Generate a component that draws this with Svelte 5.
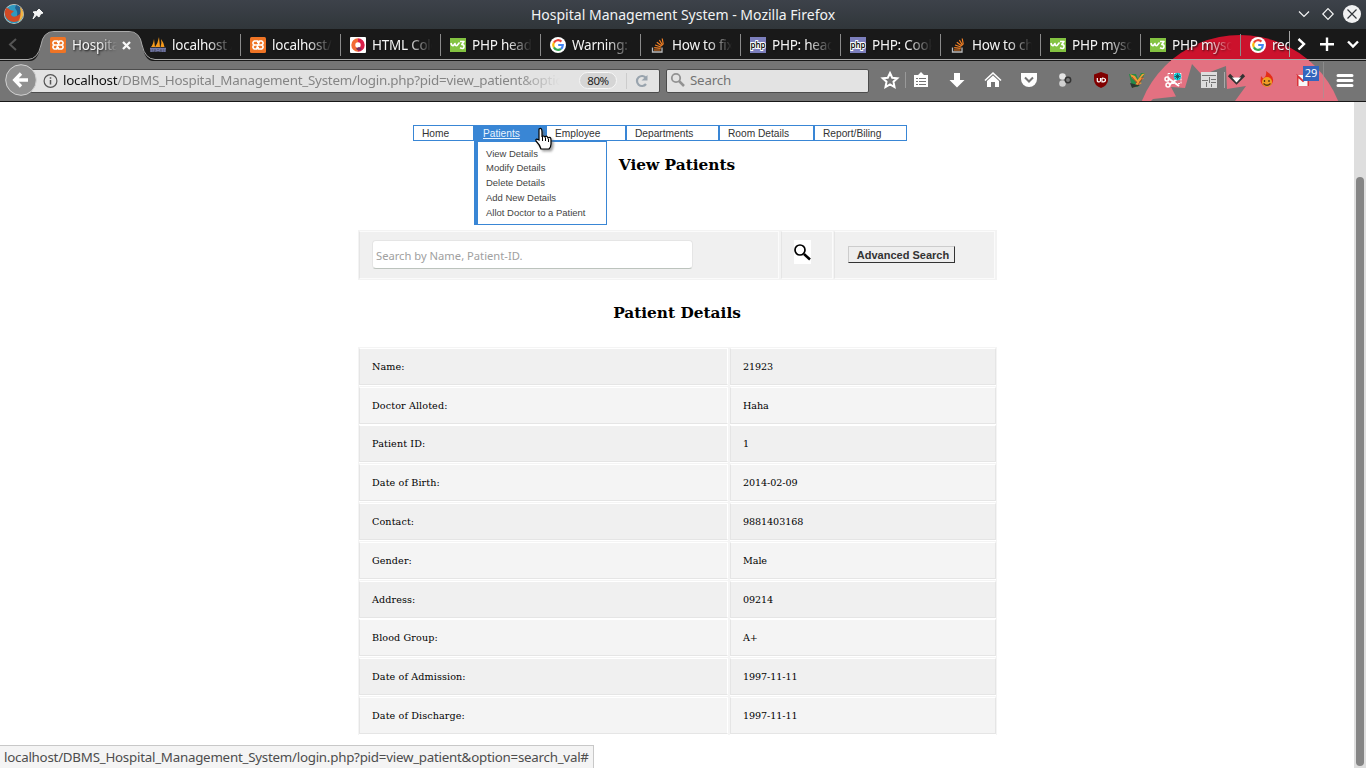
<script>
  const tabs = [
    ['xampp', 'Hospital'], ['pma', 'localhost /'], ['xampp', 'localhost/'], ['html', 'HTML Colo'],
    ['w3', 'PHP heade'], ['google', 'Warning: \''], ['so', 'How to fix'], ['php', 'PHP: head'],
    ['php', 'PHP: Cook'], ['so', 'How to ch'], ['w3', 'PHP mysql'], ['w3', 'PHP mysql'], ['google', 'redi']
  ];
  const nav = [['Home', 61], ['Patients', 72], ['Employee', 80], ['Departments', 93], ['Room Details', 95], ['Report/Biling', 92]];
  const menu = ['View Details', 'Modify Details', 'Delete Details', 'Add New Details', 'Allot Doctor to a Patient'];
  const rows = [
    ['Name:', '21923'], ['Doctor Alloted:', 'Haha'], ['Patient ID:', '1'], ['Date of Birth:', '2014-02-09'],
    ['Contact:', '9881403168'], ['Gender:', 'Male'], ['Address:', '09214'], ['Blood Group:', 'A+'],
    ['Date of Admission:', '1997-11-11'], ['Date of Discharge:', '1997-11-11']
  ];
</script>

{#snippet favicon(kind)}
  <svg class="fav" width="16" height="16" viewBox="0 0 16 16">
    {#if kind === 'xampp'}
      <rect width="16" height="16" rx="1.5" fill="#ef7425" />
      <path d="M7.800 6V4H4.200L3 5.200V6.800L4.500 8 3 9.200V10.800L4.200 12H6.500L9.500 4H11.800L13 5.200V6.800L11.500 8 13 9.200V10.800L11.800 12H8.200V10M4.500 8H11.500" fill="none" stroke="#fff" stroke-width="1.600" stroke-linejoin="round" />
    {:else if kind === 'pma'}
      <path d="M1 10Q3 8 4 2L5 10ZM5 10Q8 6 9 0L10 10ZM10.500 10Q12 6 11 2Q14 6 14.500 10Z" fill="#f79a1c" />
      <path d="M0 11.500H16M1 15V12H4V14H1M6 15V12L8 14 10 12V15M12 15V12H15V15M12 14H15" fill="none" stroke="#7479a9" stroke-width="1.400" />
    {:else if kind === 'html'}
      <rect width="16" height="16" rx="1" fill="#fff" />
      <path d="M8 3.300A4.700 4.700 0 0 0 8 12.700" fill="none" stroke="#f36b35" stroke-width="4" />
      <path d="M8 3.300A4.700 4.700 0 0 1 8 12.700" fill="none" stroke="#d91f4a" stroke-width="4" />
      <path d="M6 11.500Q8 15 12 12L9 10Z" fill="#753160" />
    {:else if kind === 'w3'}
      <rect y="1" width="16" height="14" fill="#83c341" />
      <path d="M1 6Q1.500 9 3.500 8.500L5 6.500Q5 9 7 8.500L9.500 5.500M10 4.500H14L11.800 7.500Q14.500 7.500 14 10T10 10.800" fill="none" stroke="#fff" stroke-width="1.600" stroke-linejoin="round" />
    {:else if kind === 'google'}
      <circle cx="8" cy="8" r="8" fill="#fff" />
      <g fill="none" stroke-width="2.200"><path d="M3.900 5.600A4.800 4.800 0 0 1 11.400 4.600" stroke="#ea4335" /><path d="M3.900 5.600A4.800 4.800 0 0 0 3.900 10.400" stroke="#fbbc05" /><path d="M3.900 10.400A4.800 4.800 0 0 0 11 11.800" stroke="#34a853" /><path d="M11 11.800Q12.800 10.300 12.800 8H8.200" stroke="#4285f4" /></g>
    {:else if kind === 'so'}
      <path d="M2.500 10.500V15H12V10.500" fill="none" stroke="#bcbbbb" stroke-width="1.300" />
      <path d="M4 13H10.500M4.200 10.700 10.700 11.400M5 8 11 10M6.800 5.200 11.800 9M9.400 3 12.600 8.400M12.200 1.500 13.300 7.500" stroke="#f48024" stroke-width="1.200" />
    {:else}
      <rect width="16" height="16" fill="#7c7fbd" />
      <text x="8" y="10.500" text-anchor="middle" textLength="15" lengthAdjust="spacingAndGlyphs" font-family="Noto Sans" font-size="9" font-weight="600" fill="#111" stroke="#fff" stroke-width="2" paint-order="stroke">php</text>
    {/if}
  </svg>
{/snippet}

<div class="screen">
  <header class="titlebar">
    <svg width="50" height="29" viewBox="0 0 50 29">
      <circle cx="14" cy="14" r="10" fill="#d5d3ca" />
      <circle cx="14" cy="14" r="9.300" fill="#3099bf" />
      <path d="M16 5Q22 6 22 14Q21 18 16 18Q19 13 15 8Z" fill="#23608e" />
      <path d="M6 8Q9 8 10 10L14 11 12 13Q10 14 12 16Q15 18 20 14Q22 10 20 7Q24 11 23 15A9.300 9.300 0 0 1 5 15Q4 12 6 8Z" fill="#d24a25" />
      <path d="M20 7Q24 11 23.200 15Q22 20 18 22Q22 16 20 7" fill="#f0b646" />
      <path d="M39 9 43 13 40.500 14 39 17 36.500 15 33 19 35 14 33 12 36.500 11.500Z" fill="#f5f6f6" stroke="#f5f6f6" stroke-linejoin="round" />
    </svg>
    <span class="wtitle">Hospital Management System - Mozilla Firefox</span>
    <svg width="80" height="29" viewBox="0 0 80 29" fill="none" stroke="#f4f5f5" stroke-width="1.200">
      <path d="M13 11.500 18 16.500 23 11.500M42 8.700 47.200 14 42 19.300 36.800 14Z" />
      <circle cx="66" cy="14" r="9" fill="#f0f1f2" stroke="none" /><path d="M61.500 9.500 70.500 18.500M70.500 9.500 61.500 18.500" stroke="#31363b" />
    </svg>
  </header>

  <div class="chrome">
    <svg class="theme" width="1366" height="72" viewBox="0 29 1366 72">
      <circle cx="1240" cy="141" r="106" fill="#cc122c" />
      <path d="M0 61H30Q38 61 41 45Q43 32 54 32H129Q140 32 142 45Q145 61 153 61H1366V101H0Z" fill="#757575" />
      <clipPath id="bar"><rect y="60" width="1366" height="41" /></clipPath>
      <circle cx="1240" cy="141" r="106" fill="#e37181" clip-path="url(#bar)" />
      <path d="M1151 101 1153 99 1176 96.500 1171 87 1185 88 1192 64 1202 75 1226 66 1227 89 1246 86 1235 101Z" fill="#757575" />
      <path d="M0 59.500H28Q38 59 41 45Q43 31.500 54 31.500H129Q140 31.500 142 45Q145 59 155 59.500H1366" fill="none" stroke="#aaa" />
    </svg>
    <div class="tabbar">
      <svg width="40" height="31" viewBox="0 0 40 31"><path d="M16 10 10 15.500 16 21" fill="none" stroke="#555" stroke-width="2" /></svg>
      <div class="tabs">
        {#each tabs as [kind, label], i}
          <div class="tab" class:active={i === 0}>
            {@render favicon(kind)}<span class="tlabel">{label}</span>
            {#if i === 0}<svg class="close" width="9" height="9" viewBox="0 0 9 9"><path d="M1 1 8 8M8 1 1 8" stroke="#f8f8f8" stroke-width="2.300" /></svg>{/if}
          </div>
        {/each}
      </div>
      <svg width="77" height="31" viewBox="0 0 77 31" fill="none" stroke="#fff" stroke-width="2.400">
        <path d="M.5 2V28" stroke="#a5a5a5" stroke-width="1" /><path d="M9.500 10 15 15 9.500 20.500M38 8.500V22M31 15.200H45M59 12.500 64 17.500 69 12.500" />
      </svg>
    </div>
    <div class="toolbar">
      <svg class="back" width="40" height="41" viewBox="0 0 40 41"><circle cx="21" cy="20" r="15.300" fill="#909090" stroke="#d1d1d1" /><path d="M28 20H16M21 13.500 14.700 20 21 26.500" fill="none" stroke="#fff" stroke-width="3.300" /></svg>
      <div class="url">
        <svg width="17" height="16" viewBox="0 0 17 16"><circle cx="7.500" cy="8" r="6.400" fill="none" stroke="#555" stroke-width="1.200" /><path d="M7.500 7V11.500M7.500 4.200V5.800" stroke="#555" stroke-width="1.500" /></svg>
        <span class="address"><b>localhost</b>/DBMS_Hospital_Management_System/login.php?pid=view_patient&amp;optio</span>
        <span class="zoom">80%</span>
        <svg class="reload" width="24" height="20" viewBox="0 0 24 20"><path d="M.5 2V18" stroke="#ccc" /><path d="M20 7A5 5 0 1 0 20 13" fill="none" stroke="#99a4ae" stroke-width="2.200" /><path d="M21.500 4V9.500H15.500Z" fill="#99a4ae" /></svg>
      </div>
      <div class="search">
        <svg width="20" height="20" viewBox="0 0 20 20" fill="none" stroke="#929292"><circle cx="9" cy="8" r="4.200" stroke-width="1.800" /><path d="M12 11 17 16" stroke-width="2.500" /></svg>Search
      </div>
      <svg class="tools" width="497" height="41" viewBox="869 60 497 41">
        <path d="M890 73 892.200 77.700 897.300 78.300 893.500 81.700 894.500 87 890 84.300 885.500 87 886.500 81.700 882.700 78.300 887.800 77.700Z" fill="none" stroke="#fff" stroke-width="2" />
        <path d="M905.500 72V88" stroke="#999" />
        <path d="M914 75H918L921 72 924 75H928V87H914Z" fill="#fff" /><path d="M916 78.500H926M916 81.500H926M916 84.500H926" stroke="#757575" /><path d="M918.500 77V86" stroke="#fff" />
        <path d="M954 73H960V80H964.500L957 87.500 949.500 80H954Z" fill="#fff" />
        <path d="M985 80.500 993 73 1001 80.500" fill="none" stroke="#fff" stroke-width="1.600" /><path d="M987 81 993 75.500 999 81V87H995V82H991V87H987Z" fill="#fff" />
        <path d="M1021 73H1037V79A8 8 0 0 1 1021 79Z" fill="#fff" /><path d="M1025 77.500 1029 81.500 1033 77.500" stroke="#757575" stroke-width="2" fill="none" />
        <circle cx="1062.500" cy="76.500" r="3.300" fill="#e4e4e4" /><circle cx="1062.500" cy="83.500" r="3.300" fill="#d0d0d0" /><circle cx="1068" cy="80" r="2.700" fill="#777" stroke="#333" stroke-width="1.500" />
        <path d="M1101 72 1108 74.500V80Q1108 85 1101 88Q1094 85 1094 80V74.500Z" fill="#800000" /><path d="M1097.300 78V81Q1099 83 1100.500 81V78M1102 78V82Q1105.500 82 1105.500 80T1102 78" stroke="#fff" stroke-width="1.200" fill="none" />
        <path d="M1129 74H1136L1138 79 1141 73H1145L1142 80 1138 87H1132Z" fill="#278a47" /><path d="M1130 74 1135 76 1137.500 80 1142 74 1145 73.500 1141 78 1144 78 1139 82 1142 83 1133 88 1137 82 1132 78Z" fill="#f09a34" /><path d="M1130 83 1140 85.500 1132 88Z" fill="#2a3630" /><path d="M1132 77 1137 83M1138 85 1143 77" stroke="#b8402c" />
        <rect x="1168" y="73.500" width="13" height="10" fill="none" stroke="#fff" stroke-dasharray="2 1" /><path d="M1168 78 1179 86M1180 77 1169 85" stroke="#fff" stroke-width="2" /><g fill="none" stroke="#fff" stroke-width="1.500"><circle cx="1167" cy="79" r="2" /><circle cx="1168" cy="85" r="2" /></g><circle cx="1177.500" cy="76.500" r="3.700" fill="#17d8e3" /><path d="M1177.500 73.500V79.500M1174.500 76.500H1180.500M1175.500 74.500 1179.500 78.500M1179.500 74.500 1175.500 78.500" stroke="#17434a" stroke-width=".8" />
        <path d="M1201 72H1217V88H1201Z" fill="#ddd" /><path d="M1202 75.500H1216M1202 80.500H1208M1209.500 77V83M1211 79.500H1216M1211 82.500H1216M1206.500 82V87M1211.500 84V87" stroke="#747474" />
        <path d="M1224.500 72V88" stroke="#aaa" /><path d="M1229 75 1236.500 82.500 1244 75" fill="none" stroke="#333" stroke-width="3.200" /><path d="M1232 77.500H1241L1236.500 82.500Z" fill="#fff" />
        <path d="M1266 71Q1274 76 1273 81A6.300 6.300 0 0 1 1260.500 81L1261 76Q1263 79 1264 78Q1267 75 1266 71Z" fill="#e52d18" /><circle cx="1267" cy="82" r="5" fill="#ef9d25" /><path d="M1264.500 80V82M1269 80V82M1263.500 83.500Q1267 87 1270.500 83.500" fill="none" stroke="#553514" stroke-width="1.300" />
        <rect x="1296.500" y="75" width="13" height="11" fill="#f7f7f7" /><path d="M1297.500 86V76L1303 81 1308.500 76V86" fill="none" stroke="#d9333b" stroke-width="2" />
        <rect x="1303" y="66" width="16" height="15" fill="#3465bd" /><text x="1311" y="77.300" text-anchor="middle" font-size="11" fill="#fff">29</text>
        <path d="M1323.500 62V98" stroke="#999" stroke-opacity=".6" /><path d="M1338 75.500H1352M1338 80.500H1352M1338 85.500H1352" stroke="#fff" stroke-width="3" stroke-linecap="round" />
      </svg>
    </div>
  </div>

  <main>
    <nav>
      {#each nav as [label, width], i}
        <a class:current={i === 1} style:width="{width + 1}px" href="#top">{label}</a>
      {/each}
      <div class="dropdown">{#each menu as item}<span>{item}</span>{/each}</div>
      <svg class="pointer" width="22" height="28" viewBox="0 0 22 28"><path d="M5 2Q8 0 8 5V10Q9 8 11 10Q13 8 14 11Q17 9 17 13V17Q17 20 15 22H7Q6 18 2 14Q1 11 5 13Z" fill="#fff" stroke="#000" stroke-width="1.200" /><path d="M8.500 10V14M11.500 10.500V14M14.500 12V15" stroke="#000" /></svg>
    </nav>
    <h2 class="view">View Patients</h2>
    <section class="finder">
      <div><input placeholder="Search by Name, Patient-ID." /></div>
      <div><svg width="17" height="24" viewBox="0 0 17 24"><rect width="17" height="24" fill="#fff" /><circle cx="6" cy="10" r="5" fill="none" stroke="#000" stroke-width="1.700" /><path d="M10 14 16 19.500" stroke="#000" stroke-width="2.500" /></svg></div>
      <div><button>Advanced Search</button></div>
    </section>
    <h2 class="details">Patient Details</h2>
    <section class="record">
      {#each rows as [key, value], i}
        <div class="row" class:even={i % 2 === 1}><div>{key}</div><div>{value}</div></div>
      {/each}
    </section>
    <div class="scroll"></div>
    <div class="status">localhost/DBMS_Hospital_Management_System/login.php?pid=view_patient&amp;option=search_val#</div>
  </main>
</div>

<style>
  :global(body) { margin: 0; overflow: hidden; }
  * { box-sizing: border-box; }
  svg { display: block; flex: none; }
  .screen { width: 1366px; height: 768px; display: flex; flex-direction: column; background: #fff; overflow: hidden; font-family: "Noto Sans", sans-serif; }
  .titlebar { height: 29px; flex: none; display: flex; background: linear-gradient(#3d424a, #30363a); color: #f2f3f4; }
  .wtitle { flex: 1; text-align: center; font-size: 14.030px; line-height: 29px; padding-left: 30px; }
  .chrome { position: relative; height: 73px; flex: none; background: #191919; border-bottom: 1px solid #171717; overflow: hidden; }
  .theme { position: absolute; left: 0; top: 0; }
  .tabbar { position: relative; display: flex; height: 31px; }
  .tabs { width: 1249px; flex: none; display: flex; overflow: hidden; }
  .tab { position: relative; width: 100px; flex: none; display: flex; align-items: center; padding: 1px 0 0 10px; }
  .tab:not(.active)::after { content: ""; position: absolute; right: -1px; top: 5px; height: 22px; width: 1px; background: #8b8b8b; }
  .tlabel { margin-left: 6px; width: 60px; overflow: hidden; white-space: nowrap; color: #f4f4f4; font-size: 13.500px; letter-spacing: -.24px; line-height: 24px; text-shadow: 1px 1px 2px #111; mask-image: linear-gradient(90deg, #000 60%, transparent 100%); }
  .active .tlabel { width: 45px; }
  .close { margin-left: 5px; }
  .toolbar { position: relative; height: 41px; display: flex; align-items: center; }
  .back { position: relative; z-index: 1; }
  .url { height: 24px; width: 630px; margin-left: -10px; padding-left: 12px; display: flex; align-items: center; background: #e3e3e3; border: 1px solid #4c4c4c; border-radius: 2px; font-size: 14px; color: #858585; }
  .address { margin-left: 3px; width: 497px; white-space: nowrap; overflow: hidden; font-size: 13.400px; line-height: 21px; letter-spacing: -.25px; padding-bottom: 1px; mask-image: linear-gradient(90deg, #000 91%, transparent 100%); }
  .address b { font-weight: 400; color: #111; }
  .zoom { width: 38px; height: 17px; line-height: 15px; margin-left: 19px; border: 1px solid #f6f6f6; border-radius: 9px; background: #d5d5d5; color: #222; font-size: 11.500px; letter-spacing: -.4px; text-align: center; }
  .reload { margin-left: 9px; }
  .search { width: 203px; height: 24px; margin-left: 6px; display: flex; align-items: center; gap: 3px; background: #e3e3e3; border: 1px solid #4c4c4c; border-radius: 2px; color: #737373; font-size: 13.333px; letter-spacing: -.2px; padding-bottom: 1px; }
  main { position: relative; flex: 1; padding: 23px 0 0 358px; }
  nav { position: relative; width: 494px; height: 16px; margin-left: 55px; display: flex; font: 10.200px/14px "Liberation Sans", sans-serif; }
  nav a { flex: none; height: 16px; border: 1px solid #3986d5; border-right-width: 2px; margin-right: -1px; padding: 1px 0 0 8px; color: #333; text-decoration: none; }
  nav a:nth-of-type(6) { border-right-width: 1px; }
  nav .current { background: #3986d5; color: #e8f4ff; text-decoration: underline; }
  .dropdown { position: absolute; z-index: 2; left: 61px; top: 15px; width: 133px; height: 85px; border: 1px solid #3986d5; border-top-width: 2px; border-left-width: 4px; background: #fff; padding: 4.600px 0 0 8px; font-size: 9.480px; line-height: 14.750px; color: #444; }
  .dropdown span { display: block; }
  .pointer { position: absolute; z-index: 3; left: 121px; top: 2px; filter: drop-shadow(2px 2px 1px #6669); }
  h2 { margin: 0; width: 638px; text-align: center; color: #000; font: bold 15.350px/20px "DejaVu Serif", serif; }
  .view { padding-top: 14px; }
  .finder { margin-top: 55px; width: 639px; height: 50px; display: grid; grid-template-columns: 420px 52px 161px; gap: 1.500px; padding: 1px; background: #f3f3f3; }
  .finder div { background: #f0f0f0; border: 1px solid #fbfbfb; border-left-color: #e5e5e5; padding: 8px 0 0 12px; }
  .finder div:nth-child(2) { padding-left: 12px; padding-top: 8px; }
  .finder div:nth-child(3) { padding-left: 13px; }
  input { display: block; width: 321px; height: 29px; padding: 2px 3px 0; border: 1px solid #e5e5e5; border-bottom-color: #bcc3bd; border-radius: 4px; font: 11.200px "Noto Sans", sans-serif; outline: none; background: #fff; }
  input::placeholder { color: #a0a0a0; opacity: 1; }
  button { display: block; width: 107px; height: 17px; margin-top: 6px; padding: 0 0 0 3px; border: 1px solid #333; border-top-color: #ccc; border-left-color: #ccc; background: #eee; color: #333; font: bold 11px/14px "Liberation Sans", sans-serif; white-space: nowrap; }
  .details { margin-top: 23px; }
  .record { width: 639px; height: 388px; margin-top: 23.800px; background: #f4f4f4; display: grid; grid-template-rows: repeat(10, 1fr); }
  .row { display: grid; grid-template-columns: 369px 266px; gap: 2px; padding: 1px; min-height: 0; }
  .row div { border: 1px solid #e5e5e5; border-top-color: #fff; border-right-color: #fff; background: #f0f0f0; color: #000; font: 9.600px/35px "DejaVu Serif", serif; letter-spacing: .11px; padding-left: 12px; box-shadow: 0 1px #fff; }
  .row div:last-child { border-right-color: #e5e5e5; letter-spacing: -.08px; }
  .row.even div { background: #f4f4f4; }
  .scroll { position: absolute; right: 0; top: 0; width: 12px; height: 666px; background: #dedede; }
  .scroll::after { content: ""; position: absolute; left: 2px; top: 75px; width: 8px; height: 589px; border-radius: 4px; background: #858585; }
  .status { position: absolute; left: 0; bottom: 0; width: 594px; height: 23px; border: 1px solid #c8c8c8; border-left: 0; border-bottom: 0; background: #f4f4f4; padding-left: 4px; color: #4d4d4d; font-size: 13.333px; letter-spacing: -.24px; line-height: 23px; white-space: nowrap; }
</style>
